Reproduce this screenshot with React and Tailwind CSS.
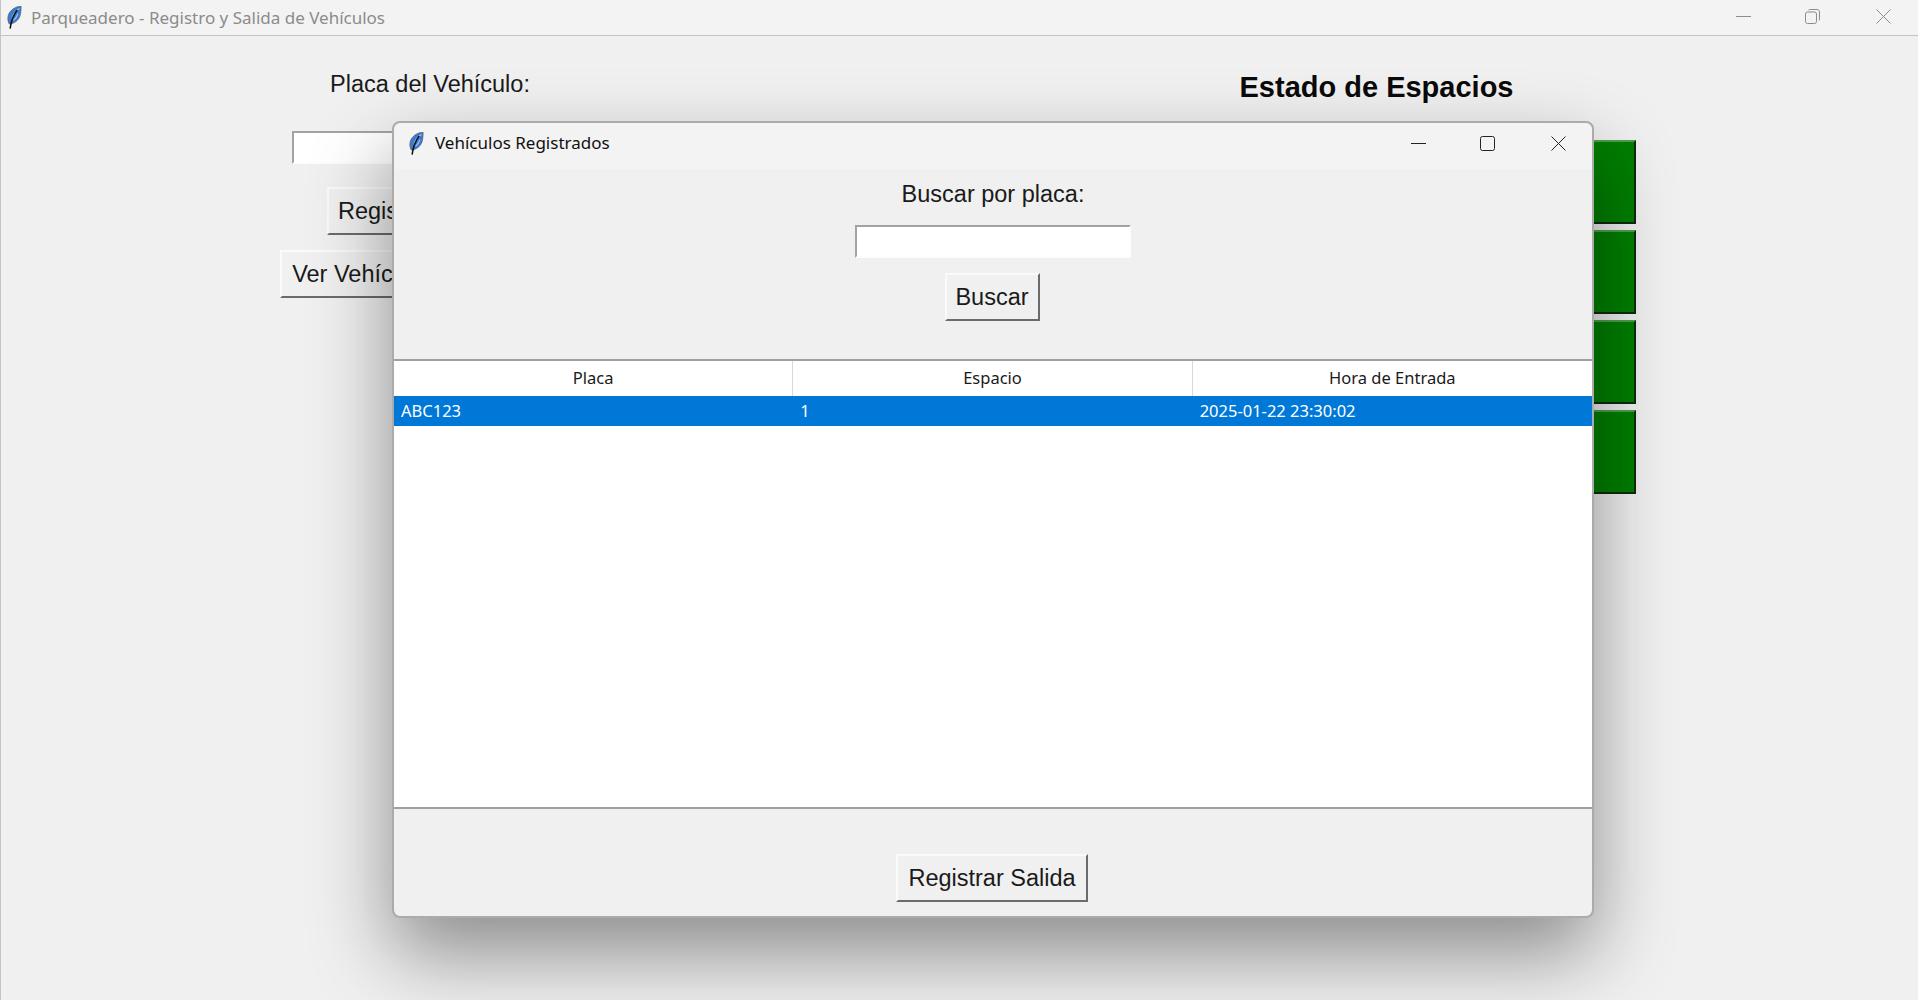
import React from 'react';

const Feather = ({ className }) => (
  <svg viewBox="0 0 14 23" className={className}>
    <path d="M13.6 0.3 C9 0.4 2.6 3.4 0.8 9.4 C0 12.4 0.4 15.6 1.8 18 C6.8 17.6 11 14.4 12.4 10 C13.6 6.5 13.4 3 13.6 0.3 Z" fill="#3a7bd0" stroke="#5a6a80" strokeWidth="0.9" />
    <path d="M12 2.4 C8.6 4 5.6 7.6 4.4 12.6 M10.4 7.6 C9.6 10.4 8 12.6 6 14.4" fill="none" stroke="#a3cbf5" strokeWidth="1.1" />
    <path d="M9.6 4 C6.6 8 3.8 14 2.6 22.6" fill="none" stroke="#101010" strokeWidth="1.5" />
  </svg>
);

const WinButton = ({ children, className = '' }) => (
  <div className={`flex w-[15px] h-[15px] items-center justify-center ${className}`}>{children}</div>
);

const TkButton = ({ children, className = '' }) => (
  <button className={`pt-[2px] bg-[#f0f0f0] border-2 border-t-[#fafafa] border-l-[#fafafa] border-r-[#6b6b6b] border-b-[#6b6b6b] text-[23.5px] text-[#1a1a1a] font-['Liberation_Sans',sans-serif] whitespace-nowrap shrink-0 ${className}`}>
    {children}
  </button>
);

const TkEntry = ({ className = '' }) => (
  <div className={`h-[33px] w-[276px] bg-white border-2 border-t-[#a3a3a3] border-l-[#a3a3a3] border-r-[#fdfdfd] border-b-[#fdfdfd] shrink-0 ${className}`} />
);

const spaces = Array.from({ length: 20 }, (_, i) => i + 1);

const columns = ['Placa', 'Espacio', 'Hora de Entrada'];
const row = ['ABC123', '1', '2025-01-22 23:30:02'];

const App = () => {
  return (
    <div className="relative w-[1918px] h-[1000px] overflow-hidden bg-[#f0f0f0] font-['Noto_Sans',sans-serif]">
      {/* main window */}
      <div className="flex h-full flex-col border-l border-[#c4c4c4]">
        <div className="flex h-[36px] shrink-0 items-center border-b border-[#c4c4c4] bg-[#f3f3f3] pl-[6px]">
          <Feather className="w-[15px] h-[23px]" />
          <span className="ml-[9px] text-[17px] text-[#8b8b8b]">Parqueadero - Registro y Salida de Vehículos</span>
          <div className="ml-auto mb-[2px] flex items-center">
            <WinButton className="mr-[54px]">
              <svg viewBox="0 0 15 15" className="w-[15px] h-[15px]"><path d="M0 7.5H15" stroke="#8c8c8c" /></svg>
            </WinButton>
            <WinButton className="mr-[56px]">
              <svg viewBox="0 0 15 15" className="w-[15px] h-[15px]" fill="none" stroke="#8c8c8c">
                <rect x="0.5" y="3" width="11" height="11.5" rx="2" />
                <path d="M3.5 1 C4 .7 4.5 .5 5 .5 H12 C13.4 .5 14.5 1.6 14.5 3 V10 C14.5 10.6 14.3 11.1 14 11.5" />
              </svg>
            </WinButton>
            <WinButton className="mr-[27px]">
              <svg viewBox="0 0 15 15" className="w-[15px] h-[15px]"><path d="M.5 .5L14.5 14.5M14.5 .5L.5 14.5" stroke="#8c8c8c" /></svg>
            </WinButton>
          </div>
        </div>

        <div className="flex flex-1 font-['Liberation_Sans',sans-serif]">
          <div className="flex w-[858px] shrink-0 flex-col items-center pt-[32px]">
            <div className="h-[32px] text-[23.5px] leading-[32px] text-[#1a1a1a]">Placa del Vehículo:</div>
            <TkEntry className="mt-[31px]" />
            <TkButton className="mt-[23px] h-[48px] w-[206px]">Registrar Entrada</TkButton>
            <TkButton className="mt-[15px] h-[48px] w-[300px]">Ver Vehículos Registrados</TkButton>
          </div>
          <div className="ml-[258px] flex w-[519px] flex-col items-center pt-[33px]">
            <div className="h-[36px] text-[29px] font-bold leading-[36px] text-[#0a0a0a]">Estado de Espacios</div>
            <div className="mt-[35px] grid w-full grid-cols-5 gap-x-[5px] gap-y-[6px]">
              {spaces.map((s) => (
                <div key={s} className="h-[84px] bg-[#007f00] border-2 border-t-[#4d9f4d] border-l-[#4d9f4d] border-r-[#0f2a0f] border-b-[#0f2a0f]" />
              ))}
            </div>
          </div>
        </div>
      </div>

      {/* dialog window */}
      <div className="absolute left-[392px] top-[121px] flex h-[797px] w-[1202px] flex-col rounded-[8px] border-2 border-[#ababab] bg-[#f0f0f0] shadow-[0_36px_80px_rgba(0,0,0,0.42)]">
        <div className="flex h-[46px] shrink-0 items-center rounded-t-[8px] bg-[#f3f3f3] pb-[6px] pl-[15px]">
          <Feather className="w-[15px] h-[23px]" />
          <span className="ml-[11px] text-[17px] text-[#111]">Vehículos Registrados</span>
          <div className="ml-auto flex items-center">
            <WinButton className="mr-[54px]">
              <svg viewBox="0 0 15 15" className="w-[15px] h-[15px]"><path d="M0 7.5H15" stroke="#222" /></svg>
            </WinButton>
            <WinButton className="mr-[56px]">
              <svg viewBox="0 0 15 15" className="w-[15px] h-[15px]" fill="none" stroke="#222"><rect x="0.5" y="0.5" width="14" height="14" rx="2" /></svg>
            </WinButton>
            <WinButton className="mr-[26px]">
              <svg viewBox="0 0 15 15" className="w-[15px] h-[15px]"><path d="M.5 .5L14.5 14.5M14.5 .5L.5 14.5" stroke="#222" /></svg>
            </WinButton>
          </div>
        </div>

        <div className="flex flex-1 flex-col items-center font-['Liberation_Sans',sans-serif]">
          <div className="mt-[9px] h-[32px] text-[23.5px] leading-[32px] text-[#1a1a1a]">Buscar por placa:</div>
          <TkEntry className="mt-[15px]" />
          <TkButton className="mt-[15px] -ml-[2px] h-[48px] w-[95px]">Buscar</TkButton>

          <div className="mt-[38px] h-[450px] w-full border-y-2 border-[#a0a0a0] bg-white font-['Noto_Sans',sans-serif]">
            <div className="grid h-[35px] grid-cols-3">
              {columns.map((c, i) => (
                <div key={c} className={`flex items-center justify-center text-[16.5px] text-[#1a1a1a] ${i < 2 ? 'border-r border-[#d9d9d9]' : ''}`}>{c}</div>
              ))}
            </div>
            <div className="grid h-[30px] grid-cols-3 bg-[#0078d7]">
              {row.map((v) => (
                <div key={v} className="flex items-center pl-[7px] text-[16.5px] text-white">{v}</div>
              ))}
            </div>
          </div>

          <TkButton className="mt-[45px] -ml-[2px] h-[48px] w-[192px]">Registrar Salida</TkButton>
        </div>
      </div>
    </div>
  );
};

export default App;
